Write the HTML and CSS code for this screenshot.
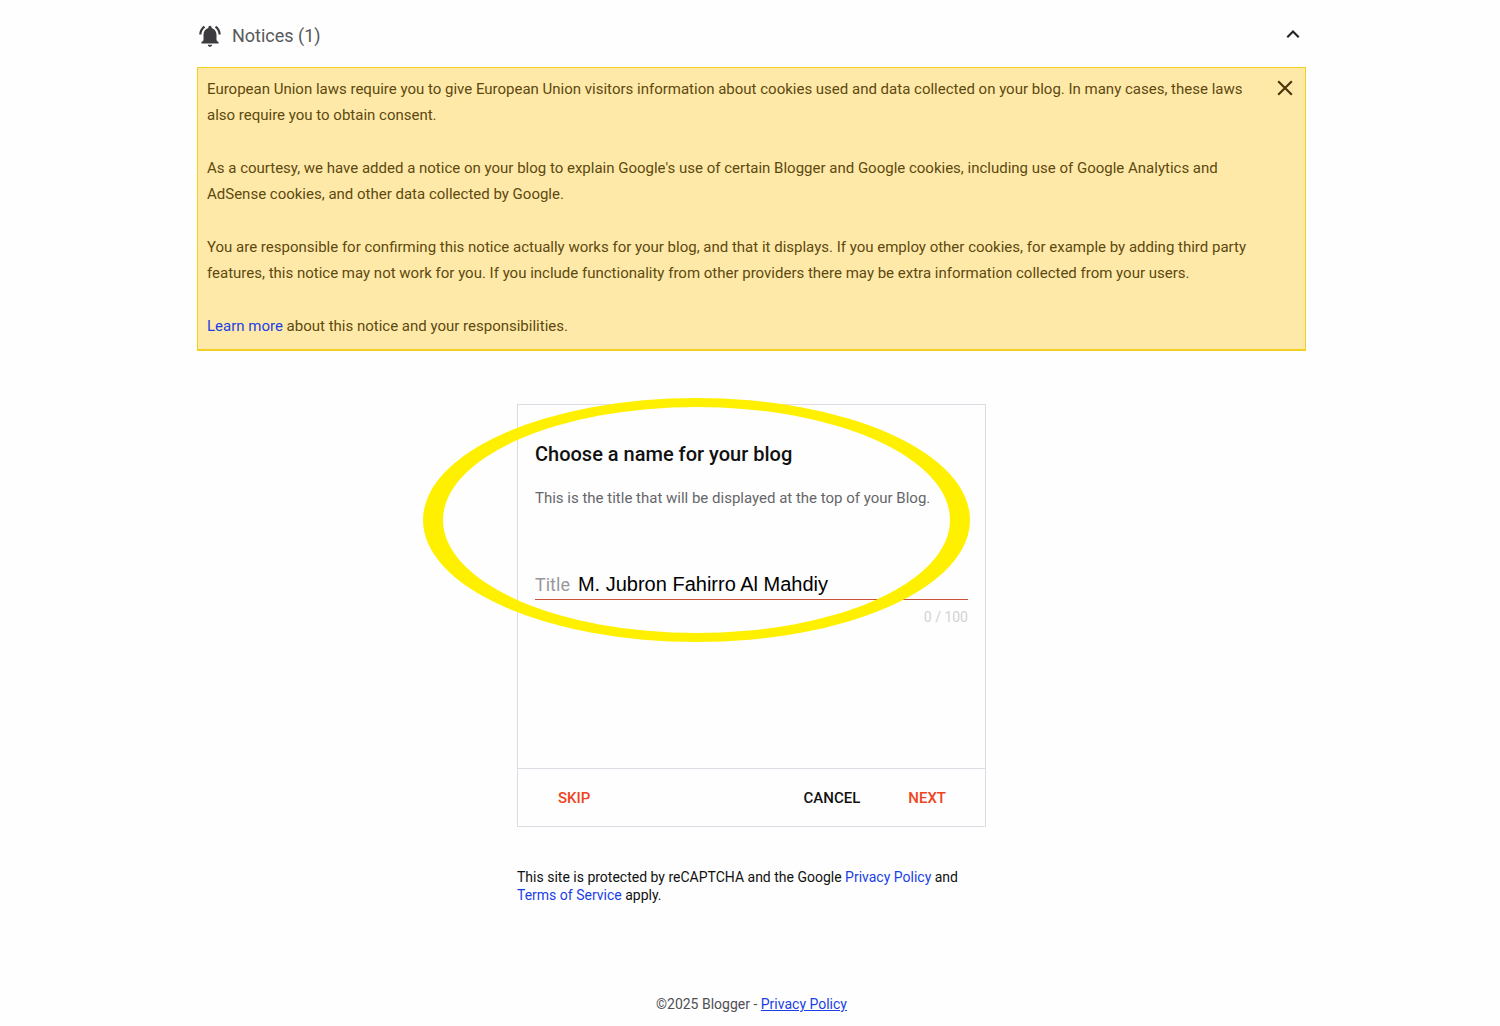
FILE: index.html
```html
<!DOCTYPE html>
<html lang="en">
<head>
    <meta charset="UTF-8">
    <meta name="viewport" content="width=device-width, initial-scale=1.0">
    <title>Blogger</title>
    <link rel="stylesheet" href="styles.css">
</head>
<body>
    <main class="page">
        <header class="notices-header">
            <svg class="bell" viewBox="0 0 24 24" width="26" height="26" aria-hidden="true">
                <path d="M7.58 4.08L6.15 2.65C3.75 4.48 2.17 7.3 2.03 10.5h2c.15-2.65 1.51-4.97 3.55-6.42zm12.39 6.42h2c-.15-3.2-1.73-6.02-4.12-7.85l-1.42 1.43c2.02 1.45 3.39 3.77 3.54 6.42zM18 11c0-3.07-1.64-5.64-4.5-6.32V4c0-.83-.67-1.5-1.5-1.5s-1.5.67-1.5 1.5v.68C7.63 5.36 6 7.92 6 11v5l-2 2v1h16v-1l-2-2v-5zm-6 11c.14 0 .27-.01.4-.04.65-.14 1.18-.58 1.44-1.18.1-.24.15-.5.15-.78h-4c.01 1.1.9 2 2.01 2z"/>
            </svg>
            <h1>Notices (1)</h1>
            <button class="icon-btn collapse" type="button" aria-label="Collapse notices">
                <svg viewBox="0 0 24 24" width="26" height="26"><path d="M12 6.500l-6 6 1.410 1.410L12 9.330l4.590 4.580L18 12.500z"/></svg>
            </button>
        </header>

        <section class="notice">
            <button class="icon-btn dismiss" type="button" aria-label="Dismiss">
                <svg viewBox="0 0 24 24" width="26" height="26"><path d="M19 6.41L17.59 5 12 10.59 6.41 5 5 6.41 10.59 12 5 17.59 6.41 19 12 13.41 17.59 19 19 17.59 13.41 12z"/></svg>
            </button>
            <p>European Union laws require you to give European Union visitors information about cookies used and data collected on your blog. In many cases, these laws also require you to obtain consent.</p>
            <p>As a courtesy, we have added a notice on your blog to explain Google's use of certain Blogger and Google cookies, including use of Google Analytics and AdSense cookies, and other data collected by Google.</p>
            <p>You are responsible for confirming this notice actually works for your blog, and that it displays. If you employ other cookies, for example by adding third party features, this notice may not work for you. If you include functionality from other providers there may be extra information collected from your users.</p>
            <p><a href="#">Learn more</a> about this notice and your responsibilities.</p>
        </section>

        <form class="card">
            <div class="card-body">
                <h2>Choose a name for your blog</h2>
                <p class="hint">This is the title that will be displayed at the top of your Blog.</p>
                <div class="field">
                    <label for="title">Title</label>
                    <input type="text" id="title" value="M. Jubron Fahirro Al Mahdiy" maxlength="100">
                </div>
                <div class="counter">0 / 100</div>
            </div>
            <div class="card-actions">
                <button class="action primary" type="button">SKIP</button>
                <button class="action cancel" type="button">CANCEL</button>
                <button class="action primary" type="button">NEXT</button>
            </div>
            <!-- highlight ring -->
            <svg class="ring" viewBox="0 0 547 244" width="547" height="244" aria-hidden="true">
                <path fill-rule="evenodd" d="M0 122a273.500 122 0 1 0 547 0a273.500 122 0 1 0-547 0zM20 122a253.500 113 0 1 0 507 0a253.500 113 0 1 0-507 0z"/>
            </svg>
        </form>

        <p class="captcha">This site is protected by reCAPTCHA and the Google <a href="#">Privacy Policy</a> and <a href="#">Terms of Service</a> apply.</p>

        <footer>©2025 Blogger - <a href="#">Privacy Policy</a></footer>
    </main>
</body>
</html>
```
FILE: styles.css
```css
* {
    box-sizing: border-box;
}

body {
    margin: 0;
    background-color: #fefefe;
    font-family: Roboto, "Liberation Sans", sans-serif;
    font-size: 15px;
    color: #111;
}

a {
    color: #1a3fe6;
    text-decoration: none;
}

button {
    font-family: inherit;
    background: none;
    border: none;
    padding: 0;
    cursor: pointer;
}

.page {
    padding: 0 194px 0 197px;
}

.notices-header {
    display: flex;
    align-items: center;
    height: 67px;
    padding: 4px 0 0;
}

.bell {
    fill: #3c3c40;
}

.notices-header h1 {
    margin: 0 auto 0 9px;
    font-size: 18px;
    font-weight: 400;
    color: #58585c;
}

.icon-btn {
    width: 26px;
    height: 26px;
}

.icon-btn svg {
    display: block;
}

.collapse {
    fill: #222;
}

.notice {
    position: relative;
    padding: 8px 34px 10px 9px;
    background-color: #ffe9a8;
    border: 1px solid #f3cf1e;
    border-bottom-width: 2px;
    line-height: 26px;
    color: #5c4a10;
}

.notice p {
    margin: 0 0 27px;
}

.notice p:last-child {
    margin-bottom: 0;
}

.dismiss {
    position: absolute;
    top: 7px;
    right: 7px;
    fill: #4a3508;
}

.card {
    position: relative;
    width: 469px;
    margin: 53px auto 0;
    border: 1px solid #dfdbe5;
}

.card-body {
    height: 363px;
    padding: 36px 17px 0;
}

.card h2 {
    margin: 0;
    font-size: 20px;
    line-height: 26px;
    font-weight: 500;
}

.hint {
    margin: 20px 0 0;
    line-height: 22px;
    color: #66666a;
}

.field {
    display: flex;
    align-items: center;
    height: 30px;
    margin-top: 61px;
    border-bottom: 1px solid #c8503c;
}

.field label {
    margin-right: 8px;
    font-size: 18px;
    color: #98989c;
}

.field input {
    flex: 1;
    min-width: 0;
    padding: 0;
    border: none;
    outline: none;
    background: none;
    font-family: "Liberation Sans", Arial, sans-serif;
    font-size: 20px;
    color: #000;
}

.counter {
    margin-top: 6px;
    font-size: 14px;
    line-height: 22px;
    text-align: right;
    color: #d2d2d4;
}

.card-actions {
    display: flex;
    align-items: center;
    height: 58px;
    padding: 0 39px 0 40px;
    border-top: 1px solid #dfdbe5;
}

.action {
    font-size: 15px;
    font-weight: 500;
}

.primary {
    color: #ee4420;
}

.cancel {
    margin: 0 48px 0 auto;
    color: #111;
}

.ring {
    position: absolute;
    top: -7px;
    left: -95px;
    fill: #fff000;
    pointer-events: none;
}

.captcha {
    width: 469px;
    margin: 41px auto 0;
    font-size: 14px;
    line-height: 18px;
}

footer {
    margin: 91px 0 14px;
    font-size: 14px;
    line-height: 18px;
    text-align: center;
    color: #505054;
}

footer a {
    text-decoration: underline;
}
```
